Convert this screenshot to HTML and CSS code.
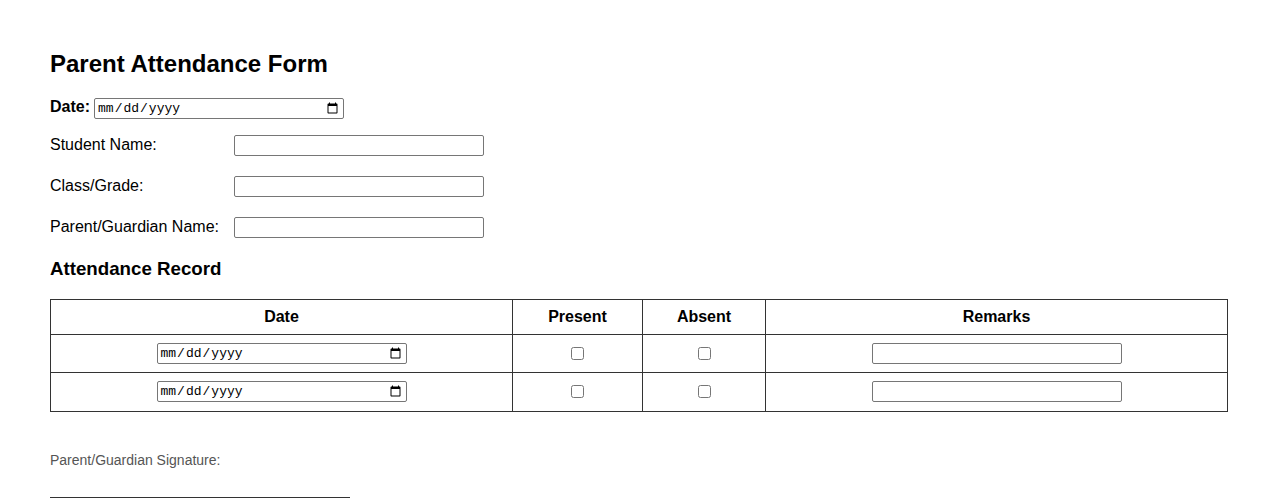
FILE: index.html
```html
<!DOCTYPE html>
<html lang="en">
<head>
<meta charset="utf-8">
<title>Parent Attendance Form</title>
<link rel="stylesheet" href="styles.css">
</head>
<body>
<h2 class="title">Parent Attendance Form</h2>
<div class="date-row">
  <label class="date-label" for="d0">Date:</label>
  <input class="date-input" id="d0" type="date">
</div>
<div class="field">
  <label class="field-label" for="s">Student Name:</label>
  <input class="text-input" id="s" type="text">
</div>
<div class="field">
  <label class="field-label" for="c">Class/Grade:</label>
  <input class="text-input" id="c" type="text">
</div>
<div class="field">
  <label class="field-label" for="p">Parent/Guardian Name:</label>
  <input class="text-input" id="p" type="text">
</div>
<h3 class="section">Attendance Record</h3>
<table class="record">
  <colgroup>
    <col class="col-date">
    <col class="col-present">
    <col class="col-absent">
    <col class="col-remarks">
  </colgroup>
  <thead>
    <tr><th>Date</th><th>Present</th><th>Absent</th><th>Remarks</th></tr>
  </thead>
  <tbody>
    <tr>
      <td><input class="date-input cell-block" type="date"></td>
      <td><input class="check" type="checkbox"></td>
      <td><input class="check" type="checkbox"></td>
      <td><input class="text-input cell-block" type="text"></td>
    </tr>
    <tr class="last-row">
      <td><input class="date-input cell-block" type="date"></td>
      <td><input class="check" type="checkbox"></td>
      <td><input class="check" type="checkbox"></td>
      <td><input class="text-input cell-block" type="text"></td>
    </tr>
  </tbody>
</table>
<p class="sig-label">Parent/Guardian Signature:</p>
<div class="sig-line"></div>
</body>
</html>
```

FILE: styles.css
```css
html, body {
  background: #fff;
}
body {
  margin: 50px;
  font-family: "Liberation Sans", Arial, sans-serif;
  color: #000;
}
.title {
  font-size: 24px;
  line-height: 28px;
  font-weight: bold;
  margin: 0 0 19px 0;
}
.date-row {
  display: flex;
  align-items: baseline;
  gap: 4px;
  padding-top: 1px;
  margin-bottom: 16px;
}
.date-label {
  font-weight: bold;
  font-size: 16px;
}
.date-input {
  box-sizing: border-box;
  width: 250px;
  height: 21px;
  font-family: "Liberation Mono", "DejaVu Sans Mono", monospace;
  font-size: 13px;
  border: 1px solid #767676;
  border-radius: 2px;
  padding: 0 2px;
  margin: 0;
}
.field {
  display: flex;
  align-items: baseline;
  margin-bottom: 20px;
}
.field-label {
  width: 184px;
  font-size: 16px;
}
.text-input {
  box-sizing: border-box;
  width: 250px;
  height: 21px;
  border: 1px solid #767676;
  border-radius: 2px;
  padding: 1px 2px;
  margin: 0;
  font-size: 13px;
}
.section {
  font-size: 18.72px;
  line-height: 22px;
  font-weight: bold;
  margin: 18px 0 19px 0;
}
.record {
  width: 100%;
  border-collapse: collapse;
  table-layout: fixed;
}
.col-date { width: 462px; }
.col-present { width: 130px; }
.col-absent { width: 123px; }
.col-remarks { width: auto; }
.record th,
.record td {
  border: 1px solid #333;
  padding: 8px;
  text-align: center;
  vertical-align: middle;
}
.record th {
  font-size: 16px;
  line-height: 18px;
  font-weight: bold;
}
.record .last-row td {
  padding-bottom: 9px;
}
.cell-block {
  display: block;
  margin: 0 auto;
}
.check {
  display: block;
  width: 13px;
  height: 13px;
  margin: 0 auto;
}
.sig-label {
  font-size: 14px;
  line-height: 16px;
  color: #555;
  margin: 40px 0 0 0;
}
.sig-line {
  width: 300px;
  border-bottom: 1px solid #333;
  margin-top: 29px;
}
```
